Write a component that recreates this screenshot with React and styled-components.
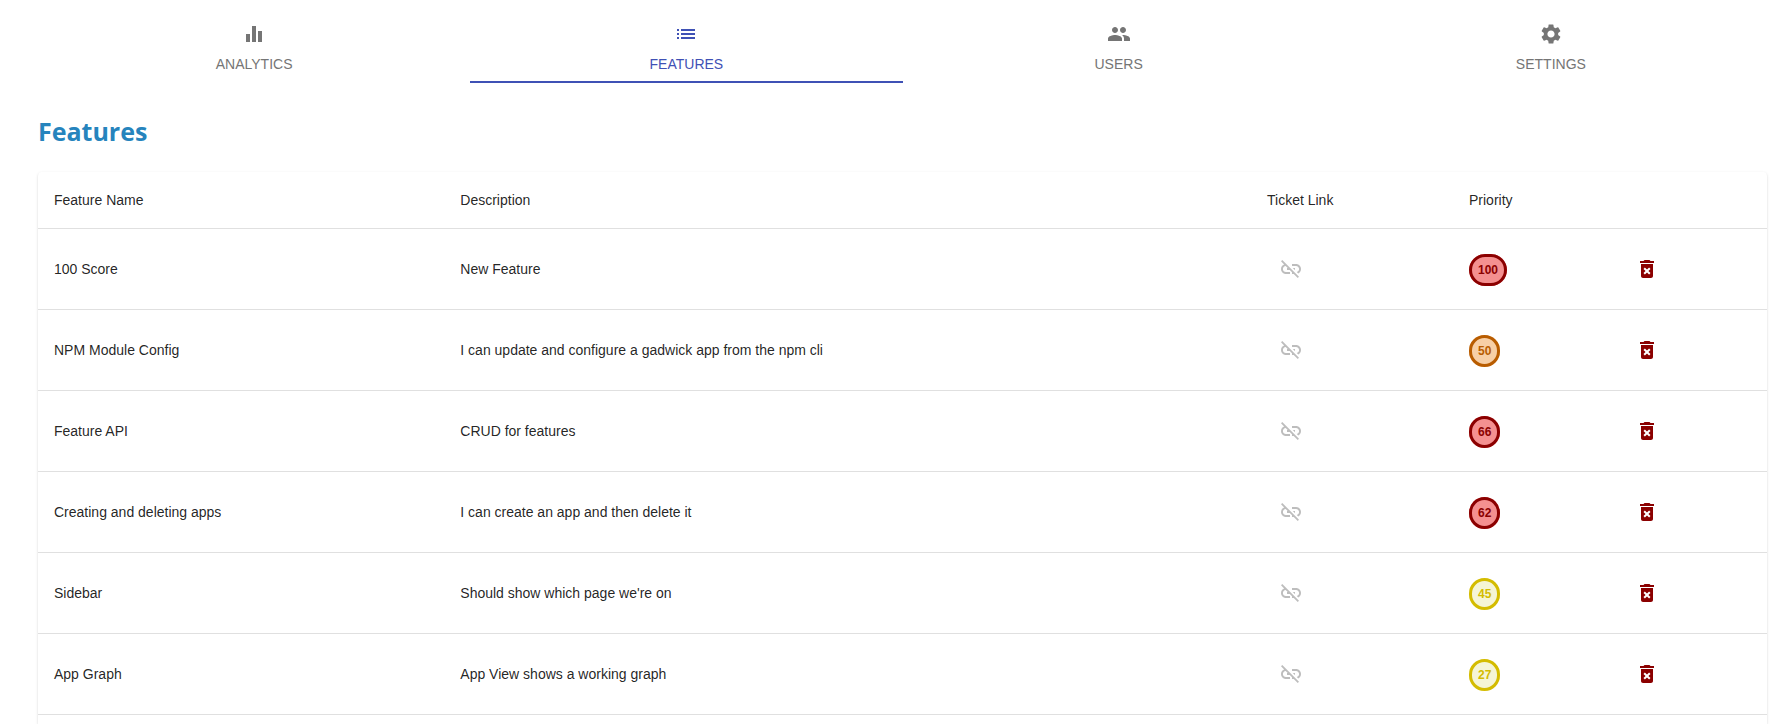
import React from "react";
import styled, { createGlobalStyle } from "styled-components";
import {
  MdEqualizer,
  MdList,
  MdPeople,
  MdSettings,
  MdLinkOff,
  MdDeleteForever,
} from "react-icons/md";

const GlobalStyle = createGlobalStyle`
  *, *::before, *::after { box-sizing: border-box; }
  body {
    margin: 0;
    background: #fff;
    color: rgba(0, 0, 0, 0.87);
    font-family: Arial, "Liberation Sans", sans-serif;
    font-size: 14px;
  }
`;

const Page = styled.main`
  display: flex;
  flex-direction: column;
  min-height: 100vh;
  padding: 11px 12px 0 38px;
`;

const Tabs = styled.nav`
  display: flex;
`;

const Tab = styled.button`
  flex: 1;
  display: flex;
  flex-direction: column;
  align-items: center;
  gap: 6px;
  padding: 11px 12px 5px;
  border: 0;
  border-bottom: 2px solid ${(p) => (p.$active ? "#3f51b5" : "transparent")};
  background: none;
  color: ${(p) => (p.$active ? "#3f51b5" : "#757575")};
  font: inherit;
  line-height: 24px;
  text-transform: uppercase;
  cursor: pointer;

  svg {
    width: 24px;
    height: 24px;
  }
`;

const Title = styled.h1`
  margin: 31px 0 23px;
  color: #2684bd;
  font-family: "Segoe UI", "Open Sans", "Noto Sans", sans-serif;
  font-size: 25px;
  font-weight: 700;
  line-height: 35px;
`;

const Card = styled.section`
  flex: 1;
  border-radius: 4px 4px 0 0;
  background: #fff;
  box-shadow:
    0 2px 1px -1px rgba(0, 0, 0, 0.2),
    0 1px 1px 0 rgba(0, 0, 0, 0.14),
    0 1px 3px 0 rgba(0, 0, 0, 0.12);
`;

const Table = styled.table`
  width: 100%;
  table-layout: fixed;
  border-collapse: separate;
  border-spacing: 0;
`;

const Column = styled.col`
  width: ${(p) => p.$width};
`;

const HeadCell = styled.th`
  padding: 16px;
  border-bottom: 1px solid #e0e0e0;
  font-weight: 400;
  line-height: 24px;
  text-align: left;
`;

const Cell = styled.td`
  padding: 16px;
  border-bottom: 1px solid #e0e0e0;
  line-height: 20px;
`;

const IconButton = styled.button`
  display: flex;
  padding: 12px;
  border: 0;
  border-radius: 50%;
  background: none;
  color: ${(p) => p.$color};
  cursor: ${(p) => (p.disabled ? "default" : "pointer")};

  svg {
    width: 24px;
    height: 24px;
  }
`;

const LEVELS = {
  high: { line: "#8b0000", fill: "#f49090" },
  medium: { line: "#b85c00", fill: "#f7cfa6" },
  low: { line: "#d4bc00", fill: "#f5f5d5" },
};

const Badge = styled.span`
  padding: 6px;
  border: 3px solid ${(p) => LEVELS[p.$level].line};
  border-radius: 16px;
  background: ${(p) => LEVELS[p.$level].fill};
  color: ${(p) => LEVELS[p.$level].line};
  font-size: 12px;
  font-weight: 700;
`;

const tabs = [
  { label: "Analytics", Icon: MdEqualizer },
  { label: "Features", Icon: MdList, active: true },
  { label: "Users", Icon: MdPeople },
  { label: "Settings", Icon: MdSettings },
];

const features = [
  { name: "100 Score", description: "New Feature", priority: 100 },
  {
    name: "NPM Module Config",
    description: "I can update and configure a gadwick app from the npm cli",
    priority: 50,
  },
  { name: "Feature API", description: "CRUD for features", priority: 66 },
  {
    name: "Creating and deleting apps",
    description: "I can create an app and then delete it",
    priority: 62,
  },
  { name: "Sidebar", description: "Should show which page we're on", priority: 45 },
  { name: "App Graph", description: "App View shows a working graph", priority: 27 },
];

const levelOf = (priority) =>
  priority > 60 ? "high" : priority >= 50 ? "medium" : "low";

export default function App() {
  return (
    <>
      <GlobalStyle />
      <Page>
        <Tabs>
          {tabs.map(({ label, Icon, active }) => (
            <Tab key={label} type="button" $active={active} aria-current={active ? "page" : undefined}>
              <Icon aria-hidden="true" />
              {label}
            </Tab>
          ))}
        </Tabs>
        <Title>Features</Title>
        <Card>
          <Table>
            <colgroup>
              <Column $width="23.5%" />
              <Column $width="auto" />
              <Column $width="202px" />
              <Column $width="154px" />
              <Column $width="160px" />
            </colgroup>
            <thead>
              <tr>
                <HeadCell scope="col">Feature Name</HeadCell>
                <HeadCell scope="col">Description</HeadCell>
                <HeadCell scope="col">Ticket Link</HeadCell>
                <HeadCell scope="col">Priority</HeadCell>
                <HeadCell as="td" />
              </tr>
            </thead>
            <tbody>
              {features.map((f) => (
                <tr key={f.name}>
                  <Cell>{f.name}</Cell>
                  <Cell>{f.description}</Cell>
                  <Cell>
                    <IconButton type="button" disabled $color="#bdbdbd" aria-label={`No ticket for ${f.name}`}>
                      <MdLinkOff aria-hidden="true" />
                    </IconButton>
                  </Cell>
                  <Cell>
                    <Badge $level={levelOf(f.priority)}>{f.priority}</Badge>
                  </Cell>
                  <Cell>
                    <IconButton type="button" $color="#8b0000" aria-label={`Delete ${f.name}`}>
                      <MdDeleteForever aria-hidden="true" />
                    </IconButton>
                  </Cell>
                </tr>
              ))}
            </tbody>
          </Table>
        </Card>
      </Page>
    </>
  );
}
